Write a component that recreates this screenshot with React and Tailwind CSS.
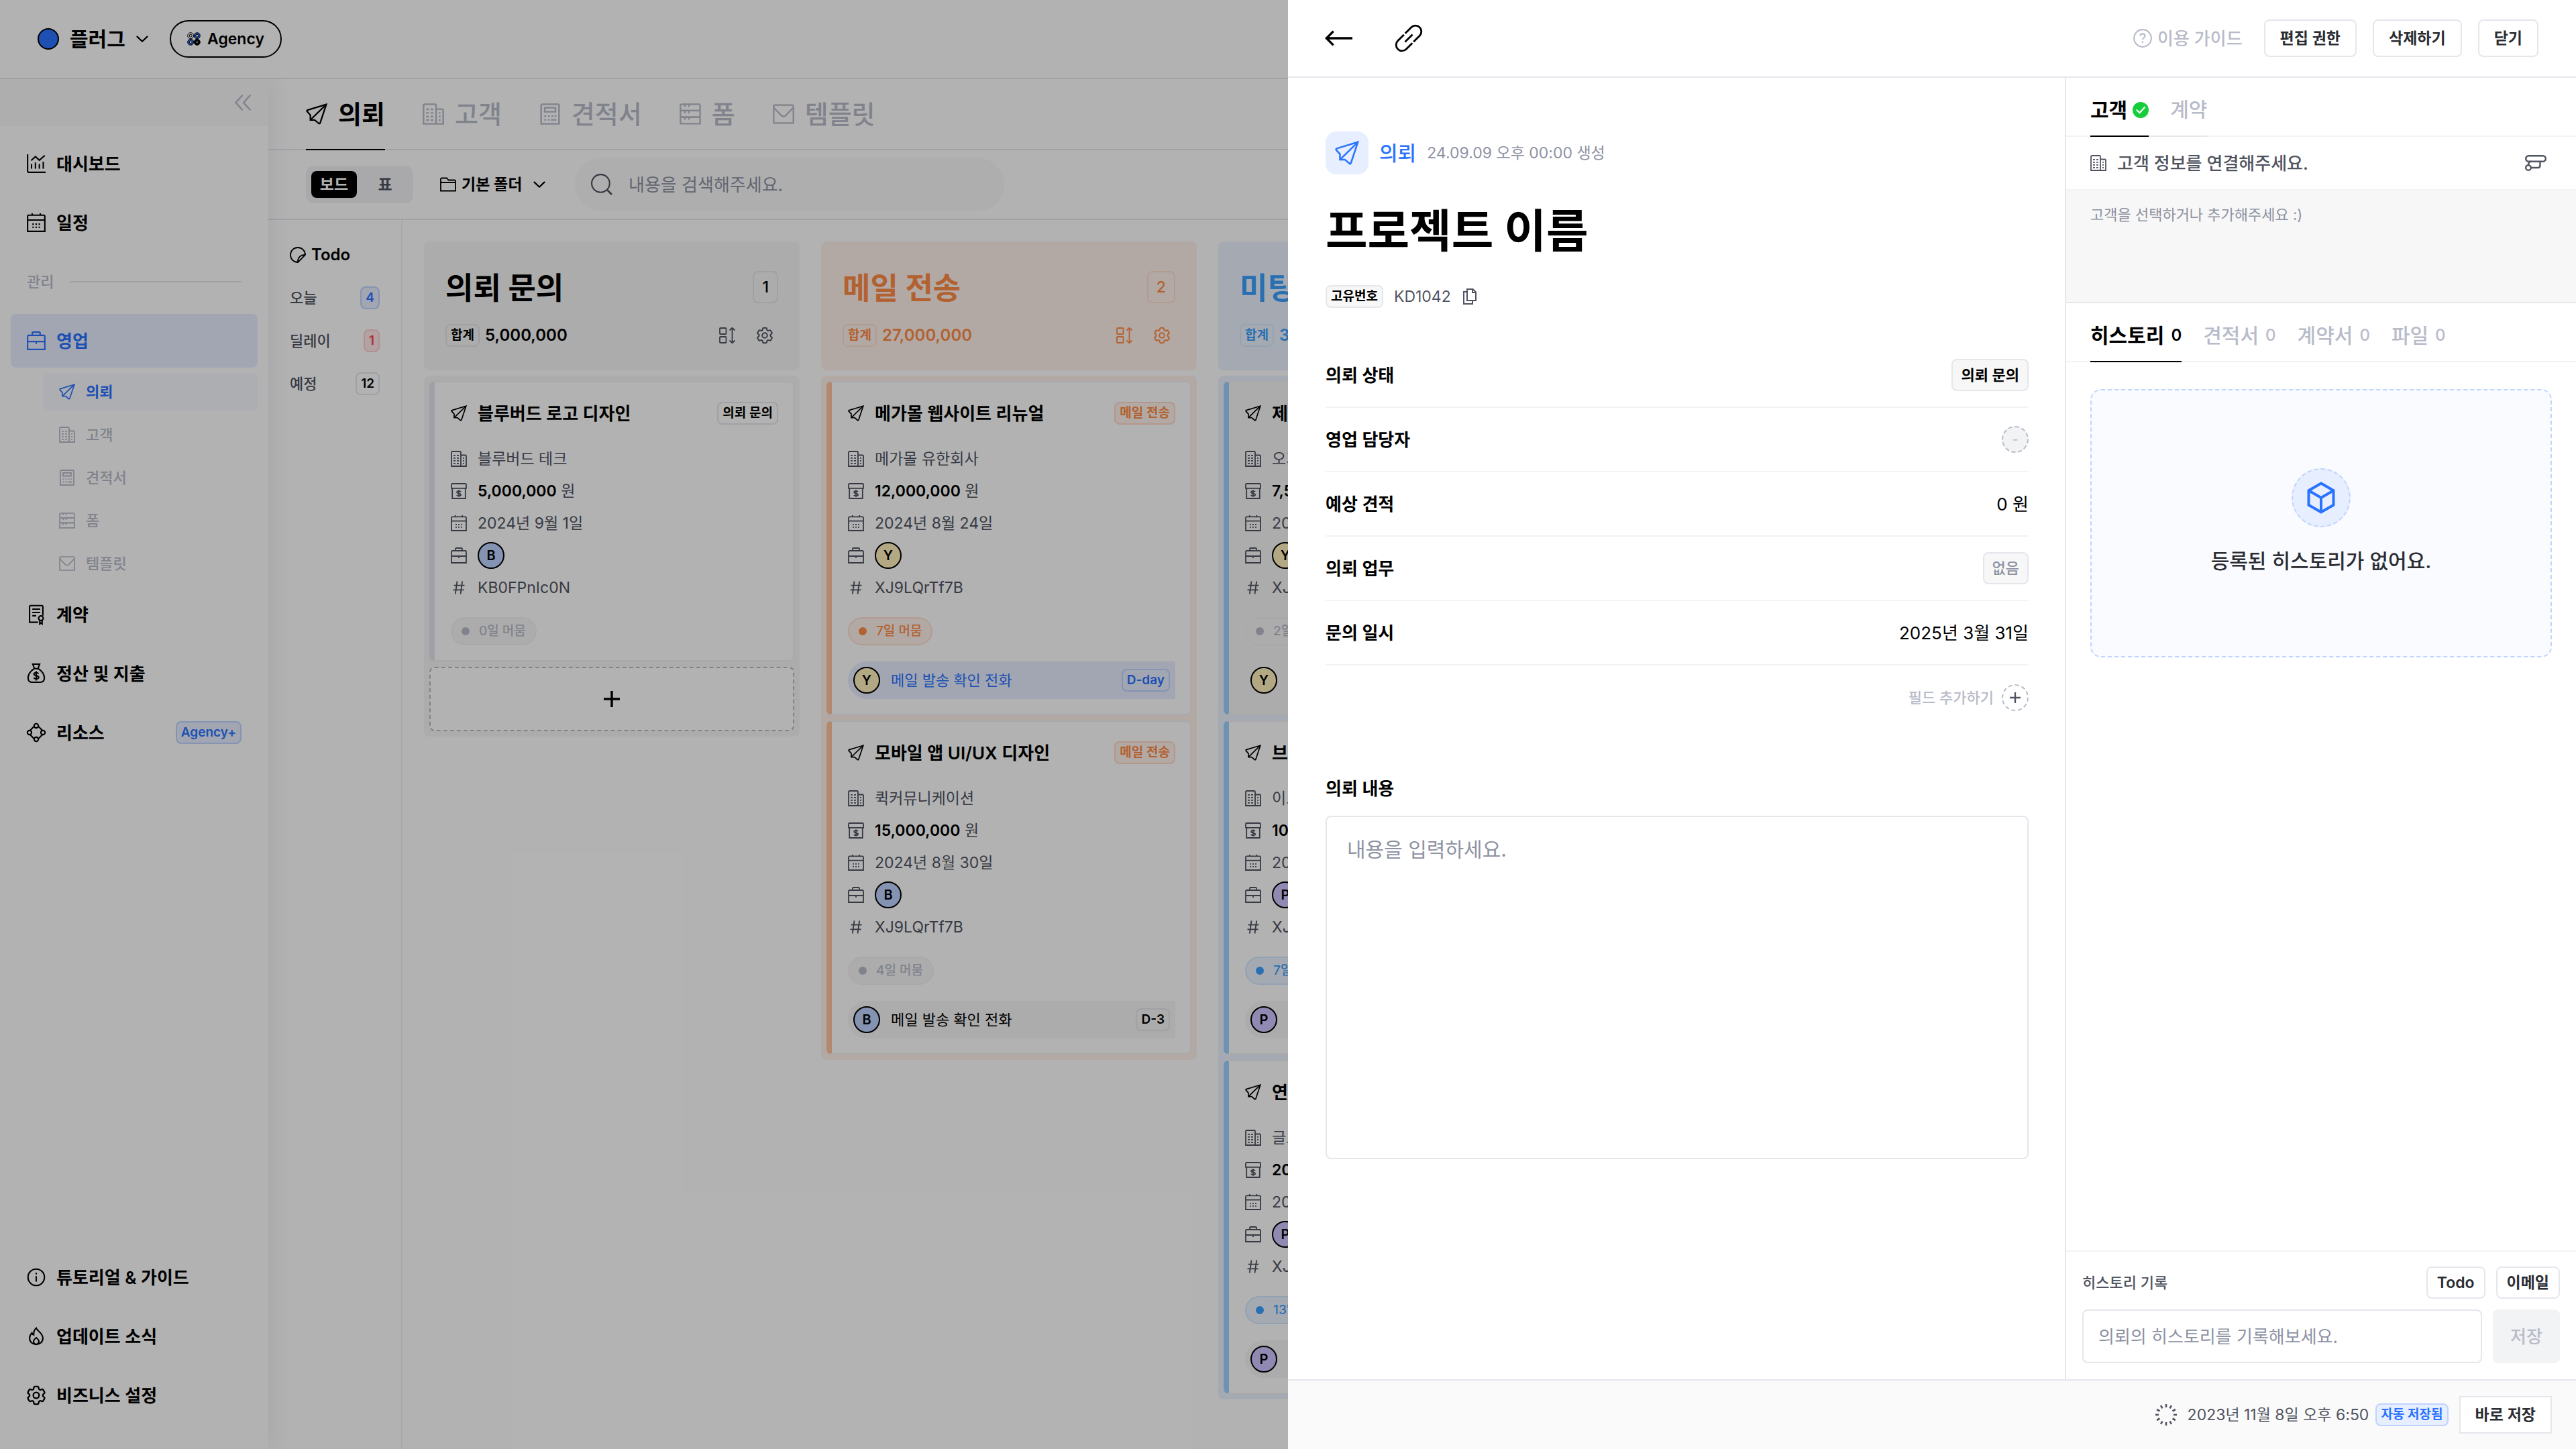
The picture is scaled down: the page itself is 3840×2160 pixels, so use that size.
import React, { useState } from "react";
import clsx from "clsx";
import { HiOutlineCog6Tooth } from "react-icons/hi2";

/* ---------- Icons ---------- */

const Icon = ({ className = "size-6", stroke = 2, children }) => (
  <svg
    viewBox="0 0 24 24"
    fill="none"
    stroke="currentColor"
    strokeWidth={stroke}
    className={clsx("shrink-0 overflow-visible", className)}
    aria-hidden="true"
  >
    {children}
  </svg>
);

const PlaneIcon = (props) => (
  <Icon stroke={1.7} {...props}>
    <path d="M22.8 1.2 1.8 7.6c-.8.3-.9 1-.5 1.5L5 13.2v5.4h4.8l4.6 3.9c.6.5 1.3.2 1.5-.5z" />
    <path d="M22.8 1.2 5.2 18.4" />
  </Icon>
);

const BuildingIcon = (props) => (
  <Icon stroke={1.8} {...props}>
    <path d="M1 23V2.5C1 1.6 1.6 1 2.5 1h11c.9 0 1.5.6 1.5 1.5V23zM15 6.5h6.5c.9 0 1.5.6 1.5 1.5v15h-8" />
    <path d="M4 6.8h3M9 6.8h3M4 10.8h3M9 10.8h3M4 14.8h3M9 14.8h3M4 18.8h3M9 18.8h3M18 10.8h2M18 14.8h2M18 18.8h2" />
  </Icon>
);

const EstimateIcon = (props) => (
  <Icon stroke={1.8} {...props}>
    <path d="M2 23V2.5C2 1.6 2.6 1 3.5 1h17c.9 0 1.5.6 1.5 1.5V23z" />
    <path d="M6 5h12v4.5H6z" />
    <path d="M5.5 14.2h2M9.5 14.2h2M13.5 14.2h2M17 14.2h2M5.5 18.5h2M9.5 18.5h2M13 18.5h6" />
  </Icon>
);

const FormIcon = (props) => (
  <Icon stroke={1.7} {...props}>
    <rect x="1" y="1" width="22" height="7.2" rx="1.5" />
    <rect x="1" y="8.2" width="22" height="7.2" rx="1.5" />
    <path d="M1 22.8v-5.9c0-.9.6-1.5 1.5-1.5h19c.9 0 1.5.6 1.5 1.5v5.9z" />
    <path d="M6 1v3M10.5 1v3M6 8.2v3M10.5 8.2v3M6 15.4v3M10.5 15.4v3" />
  </Icon>
);

const MailIcon = (props) => (
  <Icon stroke={1.7} {...props}>
    <path d="M1 22V3.5C1 2.6 1.6 2 2.5 2h19c.9 0 1.5.6 1.5 1.5V22z" />
    <path d="m1.3 5 8.2 8.6c1.4 1.4 3.6 1.4 5 0L22.7 5" />
  </Icon>
);

const ChartIcon = (props) => (
  <Icon stroke={1.8} {...props}>
    <path d="M1 0v21.5c0 .8.7 1.5 1.5 1.5H24" />
    <path d="M6 18.5v-6M11 18.5v-8M16 18.5v-6M21 18.5v-9M5.5 8 11 3l5 4.5L23 1.5" />
  </Icon>
);

const CalendarIcon = (props) => (
  <Icon stroke={1.8} {...props}>
    <path d="M1 23V3.8C1 3 1.6 2.4 2.5 2.4h19c.9 0 1.5.6 1.5 1.4V23zM1 8.6h22M6.8 0v2.4M17.2 0v2.4" />
    <path d="M7 13.8h2M11 13.8h2M15 13.8h2M7 17.8h2M11 17.8h2M15 17.8h2" />
  </Icon>
);

const BriefcaseIcon = (props) => (
  <Icon stroke={1.8} {...props}>
    <path d="M1 23V6.5C1 5.6 1.6 5 2.5 5h19c.9 0 1.5.6 1.5 1.5V23zM7 5V2.2C7 1.5 7.5 1 8.2 1h7.6c.7 0 1.2.5 1.2 1.2V5M1 13h22M12 13v3" />
  </Icon>
);

const MoneyBoxIcon = (props) => (
  <Icon stroke={1.8} {...props}>
    <path d="M1 7.8V2.5C1 1.6 1.6 1 2.5 1h19c.9 0 1.5.6 1.5 1.5v5.3zM2.2 7.8V23h19.6V7.8" />
    <path d="M15 13.2c-.6-.9-1.8-1.3-3-1.3-1.6 0-2.9.7-2.9 1.9 0 2.6 6 1.1 6 3.7 0 1.2-1.4 1.9-3.1 1.9-1.4 0-2.6-.5-3.2-1.5M12 10.5v10.2" />
  </Icon>
);

const HashIcon = (props) => (
  <Icon stroke={1.8} {...props}>
    <path d="m9.5 2.5-2.7 19M17.2 2.5l-2.7 19M4.5 8.6h16M3.5 15.4h16" />
  </Icon>
);

const ContractIcon = (props) => (
  <Icon stroke={1.8} {...props}>
    <path d="M14.5 22h-11V2c0-.8.7-1.4 1.5-1.4h14c.8 0 1.5.6 1.5 1.4v11.5" />
    <path d="M7 5.2h10M7 9.4h10M7 13.6h5" />
    <circle cx="18" cy="16.8" r="3" />
    <path d="M16.5 19.5V24l1.5-1.2 1.5 1.2v-4.5" />
  </Icon>
);

const MoneyBagIcon = (props) => (
  <Icon stroke={1.8} {...props}>
    <path d="M7.6 0h8.8l-2.2 5.8H9.8zM9.2 5.8h5.6c4 2.7 7.600 7 7.600 11.800 0 3.800-1.900 5.600-5.600 5.600H7.200c-3.700 0-5.600-1.800-5.600-5.600 0-4.800 3.600-9.100 7.600-11.800z" />
    <path d="M15 12.200c-.6-.9-1.800-1.300-3-1.300-1.600 0-2.900.7-2.900 2 0 2.700 6.100 1.200 6.100 3.900 0 1.300-1.500 2-3.200 2-1.400 0-2.600-.5-3.200-1.500M12 9v12" />
  </Icon>
);

const ResourceIcon = (props) => (
  <Icon stroke={1.8} {...props}>
    <circle cx="12" cy="3.4" r="2.7" />
    <circle cx="12" cy="20.6" r="2.7" />
    <circle cx="3.4" cy="12" r="2.7" />
    <circle cx="20.6" cy="12" r="2.7" />
    <path d="M9.300 4 4.200 9.300M14.700 4l5.100 5.300M9.300 20l-5.100-5.300M14.700 20l5.100-5.300" />
  </Icon>
);

const InfoIcon = (props) => (
  <Icon stroke={1.8} {...props}>
    <circle cx="12" cy="12" r="10.5" />
    <path d="M12 10.5v7M12 6.2v2.2" />
  </Icon>
);

const FlameIcon = (props) => (
  <Icon stroke={1.8} {...props}>
    <path d="M12 1.5c.8 3.2 8.5 6.3 8.5 12.8 0 4.8-3.700 8.200-8.500 8.200s-8.500-3.400-8.500-8.200c0-3 1.500-5 3-6.600.6 1.400 1.300 2 2.300 2.400C8.600 6.500 9.800 3.300 12 1.500z" />
    <path d="M12 22.300c-2.200-.5-3.400-2-3.400-3.900 0-1.800 1.500-3 3.400-4.600 1.900 1.600 3.400 2.800 3.400 4.600 0 1.900-1.200 3.400-3.400 3.900z" />
  </Icon>
);

const GearIcon = ({ className = "size-6" }) => (
  <HiOutlineCog6Tooth className={clsx("shrink-0 scale-125", className)} strokeWidth={1.6} aria-hidden="true" />
);

const ChevronIcon = (props) => (
  <Icon stroke={3} {...props}>
    <path d="m2 7.5 10 9.500 10-9.500" strokeLinecap="round" strokeLinejoin="round" />
  </Icon>
);

const CollapseIcon = (props) => (
  <Icon stroke={2.6} {...props}>
    <path d="M11 1.5 1.5 12 11 22.5M22.5 1.5 13 12l9.500 10.500" strokeLinecap="round" strokeLinejoin="round" />
  </Icon>
);

const StickerIcon = (props) => (
  <Icon stroke={1.8} {...props}>
    <path d="M23 12A11 11 0 1 0 12 23L23 12zM12 23v-1.5C12 16 16 12 21.5 12H23" />
    <path d="M12.5 23c-1.500-3.500.5-8.500 4-9.500" strokeWidth="1" />
  </Icon>
);

const FolderIcon = (props) => (
  <Icon stroke={1.8} {...props}>
    <path d="M1 21.5V4c0-.8.6-1.500 1.500-1.500H10l2.500 3h9c.8 0 1.500.6 1.500 1.500v14.500zM1 9h22" />
  </Icon>
);

const SearchIcon = (props) => (
  <Icon stroke={1.6} {...props}>
    <circle cx="10.8" cy="10.8" r="10" />
    <path d="m18 18 5.200 5.200" strokeWidth="2" />
  </Icon>
);

const SortIcon = (props) => (
  <Icon stroke={1.8} {...props}>
    <rect x="1" y="1" width="9.5" height="9" rx="1" />
    <rect x="1" y="14" width="9.5" height="9" rx="1" />
    <path d="M19.5 1v22M15.500 4.500l4-3.700 4 3.700M15.500 19.500l4 3.700 4-3.700" />
  </Icon>
);

const PlusIcon = (props) => (
  <Icon stroke={3.5} {...props}>
    <path d="M12 0v24M0 12h24" />
  </Icon>
);

const BackIcon = (props) => (
  <Icon stroke={2} {...props}>
    <path d="M24 12H1M7 5.800.8 12 7 18.200" />
  </Icon>
);

const LinkIcon = (props) => (
  <Icon stroke={1.7} {...props}>
    <g transform="rotate(-45 12 12)">
      <path d="M11.2 6.7H3.500a5.300 5.300 0 0 0 0 10.600h7.700M12.800 6.700h7.700a5.300 5.300 0 0 1 0 10.600h-7.700M7.300 12h9.400" />
    </g>
  </Icon>
);

const HelpIcon = (props) => (
  <Icon stroke={1.8} {...props}>
    <circle cx="12" cy="12" r="11" />
    <path d="M9 9.200c0-1.700 1.300-2.900 3-2.900s3 1.200 3 2.800c0 2.200-3 2.400-3 4.900M12 15.800v2.200" />
  </Icon>
);

const CheckBadge = () => (
  <svg viewBox="0 0 24 24" className="size-6 shrink-0" aria-hidden="true">
    <circle cx="12" cy="12" r="12" fill="#18cd3c" />
    <path d="m6.500 12.200 4 4 7.500-8.200" fill="none" stroke="#fff" strokeWidth="2.2" strokeLinecap="round" />
  </svg>
);

const RouteIcon = () => (
  <svg viewBox="0 0 32 24" fill="none" stroke="currentColor" strokeWidth="2.4" className="h-6 w-8 shrink-0" aria-hidden="true">
    <rect x="1.2" y="1.2" width="29.6" height="8.6" rx="4.3" />
    <circle cx="5" cy="19" r="3.8" />
    <path d="M8.800 19H19c2 0 3.500-1 3.500-3V9.800M5 15.200C5 12 7 9.800 9.500 9.800" />
  </svg>
);

const CopyIcon = (props) => (
  <Icon stroke={2} {...props}>
    <path d="M8 1h8.500L21 5.500V18H8zM16 1v5h5M8 5H3v18h13v-5" />
  </Icon>
);

const CubeIcon = () => (
  <svg viewBox="0 0 42 48" fill="none" stroke="currentColor" strokeWidth="4" className="h-12 w-[42px] shrink-0" aria-hidden="true">
    <path d="M21 2.500 39.500 13.200v21.600L21 45.500 2.500 34.800V13.200zM2.500 13.200 21 24l18.500-10.800M21 24v21.500" />
  </svg>
);

const SpinnerIcon = () => (
  <svg viewBox="0 0 32 32" stroke="#505461" strokeWidth="2.6" className="size-8 shrink-0" aria-hidden="true">
    {[0, 30, 60, 90, 120, 150, 180, 210, 240, 270, 300, 330].map((deg) => (
      <path key={deg} d="M16 0v5" transform={`rotate(${deg} 16 16)`} />
    ))}
  </svg>
);

const AgencyMark = () => (
  <svg viewBox="0 0 20 20" stroke="#000" strokeWidth="1" className="size-5 shrink-0" aria-hidden="true">
    <circle cx="5.2" cy="5.2" r="4.5" fill="#fff" />
    <circle cx="14.8" cy="5.2" r="4.5" fill="#2a73ff" />
    <circle cx="5.2" cy="14.8" r="4.5" fill="#2a73ff" />
    <circle cx="14.8" cy="14.8" r="4.5" fill="#000" />
    <g fill="#fff">
      <circle cx="5.2" cy="5.2" r="2" />
      <circle cx="14.8" cy="5.2" r="2" />
      <circle cx="5.2" cy="14.8" r="2" />
      <circle cx="14.8" cy="14.8" r="1.6" />
    </g>
  </svg>
);

/* ---------- Data ---------- */

const salesMenu = [
  { label: "의뢰", icon: PlaneIcon },
  { label: "고객", icon: BuildingIcon },
  { label: "견적서", icon: EstimateIcon },
  { label: "폼", icon: FormIcon },
  { label: "템플릿", icon: MailIcon },
];

const todoCounts = [
  { label: "오늘", count: 4, tone: "border-[#bfd4ff] bg-[#e7eeff] text-[#2a73ff]" },
  { label: "딜레이", count: 1, tone: "border-[#ffcfd2] bg-[#ffe9ea] text-[#ff4148]" },
  { label: "예정", count: 12, tone: "border-[#e6e6ed] text-black" },
];

const tones = {
  gray: {
    text: "text-black",
    icon: "text-[#505461]",
    head: "bg-[#f7f7f7]",
    bar: "border-l-[#e5e7f0]",
    line: "border-[#e6e6ed]",
    chip: "border-[#f3f3f5] bg-[#f7f7f7] text-[#b8bbc9]",
    badge: "border-[#e6e6ed] text-black",
  },
  orange: {
    text: "text-[#ff8c47]",
    icon: "text-[#ff8c47]",
    head: "bg-[#fff2ec]",
    bar: "border-l-[#ffc5a0]",
    line: "border-[#ffe0d0]",
    chip: "border-[#ffe0d0] bg-[#fff2ec] text-[#ff8c47]",
    badge: "border-[#ffd9c7] bg-[#fff2ec] text-[#ff8c47]",
  },
  blue: {
    text: "text-[#3ca1ff]",
    icon: "text-[#3ca1ff]",
    head: "bg-[#edf4ff]",
    bar: "border-l-[#9dd1ff]",
    line: "border-[#d5eaff]",
    chip: "border-[#d0e8ff] bg-[#edf4ff] text-[#3ca1ff]",
    badge: "border-[#d0e8ff] bg-[#edf4ff] text-[#3ca1ff]",
  },
};

const avatarTones = {
  B: "bg-[#bed3ff]",
  Y: "bg-[#fff3be]",
  P: "bg-[#cfc5ff]",
};

const columns = [
  {
    title: "의뢰 문의",
    tone: "gray",
    total: "5,000,000",
    addable: true,
    cards: [
      { title: "블루버드 로고 디자인", client: "블루버드 테크", price: "5,000,000", date: "2024년 9월 1일", owner: "B", code: "KB0FPnIc0N", stay: "0일 머뭄" },
    ],
  },
  {
    title: "메일 전송",
    tone: "orange",
    total: "27,000,000",
    cards: [
      { title: "메가몰 웹사이트 리뉴얼", client: "메가몰 유한회사", price: "12,000,000", date: "2024년 8월 24일", owner: "Y", code: "XJ9LQrTf7B", stay: "7일 머뭄", late: true, todo: "메일 발송 확인 전화", due: "D-day" },
      { title: "모바일 앱 UI/UX 디자인", client: "퀵커뮤니케이션", price: "15,000,000", date: "2024년 8월 30일", owner: "B", code: "XJ9LQrTf7B", stay: "4일 머뭄", todo: "메일 발송 확인 전화", due: "D-3" },
    ],
  },
  {
    title: "미팅 진행",
    tone: "blue",
    total: "37,500,000",
    cards: [
      { title: "제품 소개서 디자인", client: "오가닉랩", price: "7,500,000", date: "2024년 8월 20일", owner: "Y", code: "XJ9LQrTf7B", stay: "2일 머뭄", muted: true, todo: "미팅 일정 확인", due: "D-5" },
      { title: "브랜드 리뉴얼", client: "이노베이션", price: "10,000,000", date: "2024년 8월 18일", owner: "P", code: "XJ9LQrTf7B", stay: "7일 머뭄", late: true, todo: "미팅 일정 확인", due: "D-3" },
      { title: "연간 유지보수", client: "글로벌테크", price: "20,000,000", date: "2024년 8월 12일", owner: "P", code: "XJ9LQrTf7B", stay: "13일 머뭄", late: true, todo: "미팅 일정 확인", due: "D-3" },
    ],
  },
];

const recordTabs = ["히스토리", "견적서", "계약서", "파일"];

/* ---------- Shared pieces ---------- */

const Badge = ({ className, children }) => (
  <span className={clsx("flex h-[34px] items-center rounded-lg border-2 px-1.5 text-[19px] font-semibold whitespace-nowrap", className)}>
    {children}
  </span>
);

const Avatar = ({ name }) => (
  <span className={clsx("flex size-10 shrink-0 items-center justify-center rounded-full border-2 border-black text-xl font-semibold text-black", avatarTones[name])}>
    {name}
  </span>
);

const OutlineButton = ({ className, children, ...rest }) => (
  <button type="button" className={clsx("border-2 border-[#e6e6ed] bg-white text-[23px] font-semibold text-[#2b2d33]", className)} {...rest}>
    {children}
  </button>
);

/* ---------- Sidebar ---------- */

const NavItem = ({ icon: NavIcon, label, active, children }) => (
  <a
    href="#"
    className={clsx(
      "flex h-20 items-center gap-4 rounded-lg px-6 text-[26px] font-semibold",
      active ? "bg-[#e7eeff] text-[#2a73ff]" : "text-black"
    )}
  >
    <NavIcon className="size-7" />
    <span>{label}</span>
    {children}
  </a>
);

const Sidebar = () => (
  <aside className="z-10 flex w-[400px] shrink-0 flex-col bg-white shadow-[0_0_32px_rgba(90,100,150,0.14)]">
    <div className="flex h-[70px] items-center justify-end bg-[#fafafa] px-6">
      <button type="button" aria-label="메뉴 접기" className="p-0.5 text-[#b8bbc9]">
        <CollapseIcon />
      </button>
    </div>
    <nav className="flex flex-1 flex-col gap-2 px-4 pt-4 pb-10">
      <NavItem icon={ChartIcon} label="대시보드" />
      <NavItem icon={CalendarIcon} label="일정" />
      <div className="flex h-20 items-center gap-6 px-6 text-[22px] font-medium text-[#b8bbc9]">
        관리
        <span className="h-0.5 flex-1 bg-[#e6e6ed]" />
      </div>
      <NavItem icon={BriefcaseIcon} label="영업" active />
      {salesMenu.map(({ label, icon: SubIcon }, i) => (
        <a
          key={label}
          href="#"
          className={clsx(
            "ml-12 flex h-14 items-center gap-4 rounded-lg px-6 text-[22px] font-medium",
            i === 0 ? "bg-[#f7f9ff] font-semibold text-[#2a73ff]" : "text-[#b8bbc9]"
          )}
        >
          <SubIcon />
          {label}
        </a>
      ))}
      <NavItem icon={ContractIcon} label="계약" />
      <NavItem icon={MoneyBagIcon} label="정산 및 지출" />
      <NavItem icon={ResourceIcon} label="리소스">
        <Badge className="ml-auto border-[#bfd4ff] bg-[#e7eeff] text-[#2a73ff]">Agency+</Badge>
      </NavItem>
      <div className="mt-auto flex flex-col gap-2">
        <NavItem icon={InfoIcon} label="튜토리얼 & 가이드" />
        <NavItem icon={FlameIcon} label="업데이트 소식" />
        <NavItem icon={GearIcon} label="비즈니스 설정" />
      </div>
    </nav>
  </aside>
);

/* ---------- Board ---------- */

const CardRow = ({ icon: RowIcon, children }) => (
  <li className="flex h-12 items-center gap-4 whitespace-nowrap">
    <RowIcon className="size-6 text-[#505461]" />
    {children}
  </li>
);

const RequestCard = ({ card, column }) => {
  const tone = tones[column.tone];
  const dueToday = card.due === "D-day";
  return (
    <article
      className={clsx(
        "rounded-lg border-2 border-l-8 border-[#f3f3f5] py-[22px] pr-[22px] pl-6",
        tone.bar,
        card.muted ? "bg-[#f7f7f7]" : "bg-white"
      )}
    >
      <header className="mt-1 flex h-10 items-center gap-4">
        <PlaneIcon />
        <h3 className="flex-1 text-[26px] font-semibold whitespace-nowrap">{card.title}</h3>
        <Badge className={tone.badge}>{column.title}</Badge>
      </header>
      <ul className="mt-6 text-[23px] text-[#505461]">
        <CardRow icon={BuildingIcon}>{card.client}</CardRow>
        <CardRow icon={MoneyBoxIcon}>
          <span>
            <b className="font-semibold text-black">{card.price}</b> 원
          </span>
        </CardRow>
        <CardRow icon={CalendarIcon}>{card.date}</CardRow>
        <CardRow icon={BriefcaseIcon}>
          <Avatar name={card.owner} />
        </CardRow>
        <CardRow icon={HashIcon}>{card.code}</CardRow>
      </ul>
      <div className="mt-5 flex">
        <span
          className={clsx(
            "flex h-[42px] items-center gap-3.5 rounded-full border-2 px-3.5 text-[19px] font-medium",
            card.late ? tone.chip : tones.gray.chip
          )}
        >
          <span className="size-3 rounded-full bg-current" />
          {card.stay}
        </span>
      </div>
      {card.todo && (
        <div
          className={clsx(
            "mt-6 flex h-14 items-center gap-4 rounded-l-full rounded-r-lg px-2 text-[22px]",
            dueToday ? "bg-[#e7eeff] text-[#2a73ff]" : "bg-[#f7f7f7] text-black"
          )}
        >
          <Avatar name={card.owner} />
          <span className="flex-1">{card.todo}</span>
          <Badge className={dueToday ? "border-[#bfd4ff]" : "border-[#e6e6ed]"}>{card.due}</Badge>
        </div>
      )}
    </article>
  );
};

const Column = ({ column }) => {
  const tone = tones[column.tone];
  return (
    <section className="flex w-[560px] shrink-0 flex-col gap-2">
      <header className={clsx("rounded-lg px-8 pt-11 pb-8", tone.head, tone.text)}>
        <div className="flex h-12 items-center justify-between">
          <h2 className="pt-1 text-[45px] font-bold">{column.title}</h2>
          <span className={clsx("flex h-12 items-center rounded-lg border-2 px-3 text-[23px] font-medium", tone.line)}>
            {column.cards.length}
          </span>
        </div>
        <div className="mt-7 flex h-10 items-center gap-2">
          <Badge className={tone.line}>합계</Badge>
          <span className="text-2xl font-semibold">{column.total}</span>
          <div className={clsx("ml-auto flex gap-4", tone.icon)}>
            <button type="button" aria-label="정렬" className="p-2">
              <SortIcon />
            </button>
            <button type="button" aria-label="단계 설정" className="p-2">
              <GearIcon />
            </button>
          </div>
        </div>
      </header>
      <div className={clsx("flex flex-col gap-2 rounded-lg p-2", tone.head)}>
        {column.cards.map((card) => (
          <RequestCard key={card.title} card={card} column={column} />
        ))}
        {column.addable && (
          <button
            type="button"
            aria-label="의뢰 추가"
            className="flex h-24 items-center justify-center rounded-lg border-2 border-dashed border-[#b8bbc9] bg-white"
          >
            <PlusIcon />
          </button>
        )}
      </div>
    </section>
  );
};

const Board = () => (
  <main className="flex min-w-0 flex-1 flex-col">
    <nav className="flex h-[106px] shrink-0 gap-14 border-b-2 border-[#e6e6ed] px-14">
      {salesMenu.map(({ label, icon: TabIcon }, i) => (
        <a
          key={label}
          href="#"
          className={clsx(
            "-mb-0.5 flex items-center gap-4 border-b-2 text-[38px]",
            i === 0 ? "border-black font-semibold text-black" : "border-transparent font-medium text-[#b8bbc9]"
          )}
        >
          <TabIcon className="size-8" />
          {label}
        </a>
      ))}
    </nav>

    <div className="flex h-[104px] shrink-0 items-center border-b-2 border-[#e6e6ed] px-14">
      <div className="flex w-40 gap-2 rounded-xl bg-[#f2f3f5] p-2 text-[23px] font-semibold">
        <button type="button" className="h-10 flex-1 rounded-lg bg-black text-white">보드</button>
        <button type="button" className="h-10 flex-1 rounded-lg text-[#505461]">표</button>
      </div>
      <label className="ml-10 flex items-center gap-2 text-[23px] font-semibold">
        <FolderIcon />
        <select className="appearance-none bg-transparent" aria-label="폴더">
          <option>기본 폴더</option>
        </select>
        <ChevronIcon className="ml-2 size-[18px]" />
      </label>
      <label className="ml-11 flex h-20 w-[640px] items-center gap-6 rounded-full bg-[#fafafa] px-6">
        <SearchIcon className="size-8 text-[#505461]" />
        <input
          type="search"
          aria-label="검색"
          placeholder="내용을 검색해주세요."
          className="min-w-0 flex-1 bg-transparent text-[26px] placeholder:text-[#8d92a3]"
        />
      </label>
    </div>

    <div className="flex min-h-0 flex-1">
      <aside className="w-[200px] shrink-0 border-r-2 border-[#f3f3f5] px-8 pt-5 text-[22px]">
        <h2 className="flex h-16 items-center gap-2 text-2xl font-semibold">
          <StickerIcon />
          Todo
        </h2>
        {todoCounts.map((item) => (
          <div key={item.label} className="flex h-16 items-center justify-between font-medium text-[#505461]">
            {item.label}
            <Badge className={item.tone}>{item.count}</Badge>
          </div>
        ))}
      </aside>
      <div className="flex min-w-0 flex-1 items-start gap-8 overflow-hidden p-8">
        {columns.map((column) => (
          <Column key={column.title} column={column} />
        ))}
      </div>
    </div>
  </main>
);

/* ---------- Drawer ---------- */

const Field = ({ label, children }) => (
  <div className="flex h-24 items-center justify-between border-b-2 border-[#f3f3f5] text-[26px]">
    <dt className="font-semibold">{label}</dt>
    <dd>{children}</dd>
  </div>
);

const ValueBadge = ({ className, children }) => (
  <span className={clsx("flex h-12 items-center rounded-lg border-2 border-[#e6e6ed] bg-[#f7f7f7] px-3 text-[22px]", className)}>
    {children}
  </span>
);

const RequestDetail = () => {
  const [content, setContent] = useState("");
  return (
    <section className="min-w-0 flex-1 border-r-2 border-[#e6e6ed] pt-20 pr-[54px] pl-14">
      <div className="flex h-16 items-center gap-4">
        <span className="flex size-16 items-center justify-center rounded-2xl bg-[#e7eeff] text-[#2a73ff]">
          <PlaneIcon className="size-9" />
        </span>
        <span className="text-[30px] font-medium text-[#2a73ff]">의뢰</span>
        <time className="text-[23px] text-[#8d92a3]">24.09.09 오후 00:00 생성</time>
      </div>
      <h1 className="mt-10 text-[68px] leading-[88px] font-bold">프로젝트 이름</h1>
      <div className="mt-9 flex h-9 items-center gap-4 text-[#505461]">
        <Badge className="border-[#e6e6ed] bg-[#f7f7f7] text-black">고유번호</Badge>
        <span className="text-[23px]">KD1042</span>
        <button type="button" aria-label="번호 복사">
          <CopyIcon />
        </button>
      </div>

      <dl className="mt-13">
        <Field label="의뢰 상태">
          <ValueBadge className="font-semibold">의뢰 문의</ValueBadge>
        </Field>
        <Field label="영업 담당자">
          <span className="flex size-10 items-center justify-center rounded-full border-2 border-dashed border-[#b8bbc9] bg-[#f2f3f5] text-xl text-[#b8bbc9]">
            -
          </span>
        </Field>
        <Field label="예상 견적">0 원</Field>
        <Field label="의뢰 업무">
          <ValueBadge className="font-medium text-[#8d92a3]">없음</ValueBadge>
        </Field>
        <Field label="문의 일시">2025년 3월 31일</Field>
      </dl>
      <div className="flex h-24 items-center justify-end">
        <button type="button" className="flex items-center gap-3 text-[22px] font-medium text-[#b8bbc9]">
          필드 추가하기
          <span className="flex size-10 items-center justify-center rounded-full border-2 border-dashed border-[#b8bbc9] text-[#505461]">
            <PlusIcon className="size-4" />
          </span>
        </button>
      </div>

      <label htmlFor="content" className="mt-17 block text-[26px] leading-10 font-semibold">
        의뢰 내용
      </label>
      <textarea
        id="content"
        value={content}
        onChange={(e) => setContent(e.target.value)}
        placeholder="내용을 입력하세요."
        className="mt-5 block h-[512px] w-full resize-none rounded-lg border-2 border-[#e6e6ed] px-[30px] py-7 text-[30px] leading-10 placeholder:text-[#8d92a3]"
      />
    </section>
  );
};

const RecordPanel = () => {
  const [memo, setMemo] = useState("");
  return (
    <aside className="flex w-[760px] shrink-0 flex-col">
      <nav className="flex h-[88px] border-b-2 border-[#f3f3f5] px-9 text-[30px]">
        <div className="-mb-0.5 flex gap-8 border-b-2 border-[#e6e6ed]">
          <a href="#" className="-mb-0.5 flex items-center gap-2 border-b-2 border-black pt-2.5 font-semibold">
            고객
            <CheckBadge />
          </a>
          <a href="#" className="flex items-center pt-2 font-medium text-[#b8bbc9]">계약</a>
        </div>
      </nav>
      <div className="flex h-20 items-center gap-4 border-b-2 border-[#f3f3f5] pr-11 pl-9 text-[#505461]">
        <BuildingIcon />
        <span className="flex-1 text-[26px] font-medium">고객 정보를 연결해주세요.</span>
        <button type="button" aria-label="고객 연결">
          <RouteIcon />
        </button>
      </div>
      <p className="h-[168px] border-b-2 border-[#e6e6ed] bg-[#f7f7f7] px-9 py-4 text-[22px] leading-10 text-[#8d92a3]">
        고객을 선택하거나 추가해주세요 :)
      </p>
      <nav className="flex h-[88px] gap-8 border-b-2 border-[#f3f3f5] px-9 text-[30px]">
        {recordTabs.map((tab, i) => (
          <a
            key={tab}
            href="#"
            className={clsx(
              "-mb-0.5 flex items-center gap-2.5 border-b-2 pt-2.5",
              i === 0 ? "border-black font-semibold" : "border-transparent font-medium text-[#b8bbc9]"
            )}
          >
            {tab}
            <span className="text-2xl">0</span>
          </a>
        ))}
      </nav>
      <div className="flex-1 px-9 pt-10">
        <div className="flex h-[400px] flex-col items-center justify-center gap-6 rounded-2xl border-2 border-dashed border-[#bfd4ff] bg-[#f9fbff]">
          <span className="flex size-[88px] items-center justify-center rounded-full border-2 border-dashed border-[#bfd4ff] bg-[#e7eeff] text-[#2a73ff]">
            <CubeIcon />
          </span>
          <p className="text-[30px] leading-13 font-medium text-[#2b2d33]">등록된 히스토리가 없어요.</p>
        </div>
      </div>
      <form className="border-t-2 border-[#f3f3f5] px-6 pt-[22px] pb-6" onSubmit={(e) => e.preventDefault()}>
        <div className="flex items-center gap-4">
          <label htmlFor="memo" className="flex-1 text-[22px] font-medium text-[#505461]">
            히스토리 기록
          </label>
          <OutlineButton className="h-12 rounded-lg px-3.5">Todo</OutlineButton>
          <OutlineButton className="h-12 rounded-lg px-3.5">이메일</OutlineButton>
        </div>
        <div className="mt-4 flex gap-4">
          <input
            id="memo"
            type="text"
            value={memo}
            onChange={(e) => setMemo(e.target.value)}
            placeholder="의뢰의 히스토리를 기록해보세요."
            className="h-20 min-w-0 flex-1 rounded-lg border-2 border-[#e6e6ed] px-[22px] text-[26px] placeholder:text-[#8d92a3]"
          />
          <button type="submit" className="h-20 w-[100px] rounded-lg bg-[#f2f3f5] text-[26px] font-medium text-[#b8bbc9]">
            저장
          </button>
        </div>
      </form>
    </aside>
  );
};

const RequestDrawer = () => (
  <div role="dialog" aria-label="의뢰 상세" className="flex w-1/2 shrink-0 flex-col bg-white">
    <header className="flex h-[116px] shrink-0 items-center border-b-2 border-[#e6e6ed] px-14">
      <button type="button" aria-label="뒤로">
        <BackIcon className="size-10" />
      </button>
      <button type="button" aria-label="링크 복사" className="ml-16">
        <LinkIcon className="size-10" />
      </button>
      <a href="#" className="mr-8 ml-auto flex items-center gap-2 text-[26px] font-medium text-[#b8bbc9]">
        <HelpIcon className="size-7" />
        이용 가이드
      </a>
      <div className="flex gap-6">
        <OutlineButton className="h-14 rounded-lg px-[22px]">편집 권한</OutlineButton>
        <OutlineButton className="h-14 rounded-lg px-[22px]">삭제하기</OutlineButton>
        <OutlineButton className="h-14 rounded-lg px-[22px]">닫기</OutlineButton>
      </div>
    </header>
    <div className="flex min-h-0 flex-1">
      <RequestDetail />
      <RecordPanel />
    </div>
    <footer className="flex h-[104px] shrink-0 items-center justify-end gap-4 border-t-2 border-[#e6e6ed] bg-[#fafafa] px-9">
      <SpinnerIcon />
      <div className="flex items-center gap-2.5">
        <span className="text-[23px] text-[#505461]">2023년 11월 8일 오후 6:50</span>
        <Badge className="border-[#bfd4ff] bg-[#e7eeff] text-[#2a73ff]">자동 저장됨</Badge>
      </div>
      <OutlineButton className="h-14 px-[22px]">바로 저장</OutlineButton>
    </footer>
  </div>
);

const App = () => (
  <div className="flex h-screen overflow-hidden bg-white font-['Inter','Noto_Sans_CJK_KR',sans-serif] text-black">
    <div className="relative flex min-w-0 flex-1 flex-col overflow-hidden">
      <header className="z-20 flex h-[118px] shrink-0 items-center border-b-2 border-[#e6e6ed] bg-white px-14">
        <span className="size-8 rounded-full border-2 border-black bg-[#2a73ff]" />
        <label className="ml-4 flex items-center gap-4 text-[30px] font-semibold">
          <select className="appearance-none bg-transparent" aria-label="워크스페이스">
            <option>플러그</option>
          </select>
          <ChevronIcon className="size-[18px]" />
        </label>
        <button type="button" className="ml-8 flex h-14 items-center gap-2.5 rounded-full border-2 border-black px-6 text-[23px] font-semibold">
          <AgencyMark />
          Agency
        </button>
      </header>
      <div className="flex min-h-0 flex-1">
        <Sidebar />
        <Board />
      </div>

      {/* Dim layer while the drawer is open */}
      <div className="absolute inset-0 z-30 bg-black/30" />
    </div>
    <RequestDrawer />
  </div>
);

export default App;
